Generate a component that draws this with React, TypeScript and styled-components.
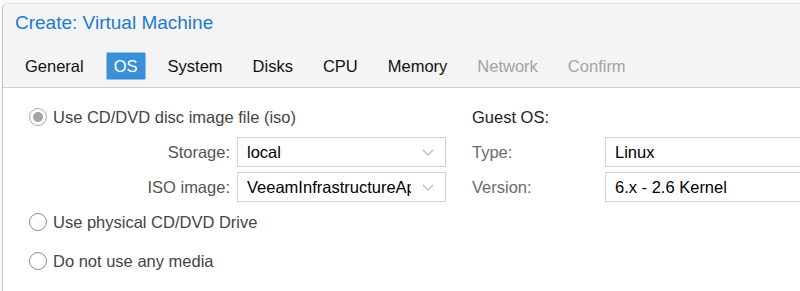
import React from "react";
import styled, { createGlobalStyle } from "styled-components";

const GlobalStyle = createGlobalStyle`
  html, body {
    margin: 0;
    padding: 0;
    background: #fafafa;
    overflow: hidden;
  }
  body {
    font-family: "Liberation Sans", Arial, sans-serif;
  }
`;

const Window = styled.div`
  margin: 3px 0 0 2px;
  height: 300px;
  border-left: 1px solid #c3c3c3;
  border-top: 1px solid #e4e4e4;
  border-top-left-radius: 5px;
  background: #f4f4f4;
  display: flex;
  flex-direction: column;
`;

const Title = styled.div`
  padding: 8px 0 0 12px;
  font-size: 19px;
  line-height: 22px;
  color: #1d7ad0;
`;

const TabBar = styled.div`
  display: flex;
  gap: 14px;
  padding: 18px 0 7px 14px;
`;

const Tab = styled.div<{ $active?: boolean; $disabled?: boolean }>`
  height: 26px;
  line-height: 27px;
  padding: 0 7px;
  font-size: 16.5px;
  border: 1px solid ${({ $active }) => ($active ? "#8fbfea" : "transparent")};
  border-radius: 2px;
  background: ${({ $active }) => ($active ? "#3a8fd6" : "transparent")};
  color: ${({ $active, $disabled }) =>
    $active ? "#fff" : $disabled ? "#a3a3a3" : "#111"};
`;

const Body = styled.div`
  flex: 1;
  background: #fff;
  border-top: 1px solid #cfcfcf;
  display: grid;
  grid-template-columns: 443px 1fr;
  column-gap: 26px;
  padding-top: 14px;
`;

const Column = styled.div`
  display: flex;
  flex-direction: column;
  gap: 5px;
`;

const RadioRow = styled.label<{ $gapTop?: number }>`
  display: flex;
  align-items: center;
  height: 30px;
  padding-left: 26px;
  margin-top: ${({ $gapTop }) => $gapTop ?? 0}px;
  font-size: 16.5px;
  color: #444;
  gap: 6px;
`;

const RadioCircle = styled.span<{ $checked?: boolean }>`
  box-sizing: border-box;
  width: 18px;
  height: 18px;
  border-radius: 50%;
  border: 1px solid ${({ $checked }) => ($checked ? "#a9a9a9" : "#8d8d8d")};
  display: flex;
  align-items: center;
  justify-content: center;
  &::after {
    content: "";
    display: ${({ $checked }) => ($checked ? "block" : "none")};
    width: 10px;
    height: 10px;
    border-radius: 50%;
    background: #a3a3a3;
  }
`;

const FieldRow = styled.div<{ $labelWidth: number; $align: "left" | "right" }>`
  display: grid;
  grid-template-columns: ${({ $labelWidth }) => $labelWidth}px 1fr;
  align-items: center;
  height: 30px;
  label {
    text-align: ${({ $align }) => $align};
    padding-right: ${({ $align }) => ($align === "right" ? 7 : 0)}px;
  }
`;

const FieldLabel = styled.label<{ $muted?: boolean }>`
  font-size: 16.5px;
  color: ${({ $muted }) => ($muted ? "#6a6a6a" : "#555")};
`;

const Heading = styled.div`
  height: 30px;
  display: flex;
  align-items: center;
  font-size: 16.5px;
  color: #222;
`;

const Select = styled.div<{ $width?: number }>`
  box-sizing: border-box;
  height: 30px;
  width: ${({ $width }) => ($width ? `${$width}px` : "auto")};
  min-width: 0;
  border: 1px solid #d2d2d2;
  display: flex;
  align-items: center;
  padding-left: 9px;
  font-size: 16.5px;
  color: #000;
  overflow: hidden;
`;

const SelectText = styled.span`
  flex: 1;
  min-width: 0;
  white-space: nowrap;
  overflow: hidden;
`;

const Trigger = styled.span`
  width: 34px;
  display: flex;
  justify-content: center;
  flex-shrink: 0;
`;

const Chevron = () => (
  <svg width="12" height="7" viewBox="0 0 12 7">
    <path d="M1 1 L6 6 L11 1" fill="none" stroke="#b4b4b4" strokeWidth="1.2" />
  </svg>
);

const tabs = [
  { name: "General" },
  { name: "OS", active: true },
  { name: "System" },
  { name: "Disks" },
  { name: "CPU" },
  { name: "Memory" },
  { name: "Network", disabled: true },
  { name: "Confirm", disabled: true },
];

export default function App() {
  return (
    <>
      <GlobalStyle />
      <Window>
        <Title>Create: Virtual Machine</Title>
        <TabBar>
          {tabs.map((t) => (
            <Tab key={t.name} $active={t.active} $disabled={t.disabled}>
              {t.name}
            </Tab>
          ))}
        </TabBar>
        <Body>
          <Column>
            <RadioRow>
              <RadioCircle $checked />
              Use CD/DVD disc image file (iso)
            </RadioRow>
            <FieldRow $labelWidth={234} $align="right">
              <FieldLabel>Storage:</FieldLabel>
              <Select>
                <SelectText>local</SelectText>
                <Trigger>
                  <Chevron />
                </Trigger>
              </Select>
            </FieldRow>
            <FieldRow $labelWidth={234} $align="right">
              <FieldLabel>ISO image:</FieldLabel>
              <Select>
                <SelectText>VeeamInfrastructureAppliance.iso</SelectText>
                <Trigger>
                  <Chevron />
                </Trigger>
              </Select>
            </FieldRow>
            <RadioRow>
              <RadioCircle />
              Use physical CD/DVD Drive
            </RadioRow>
            <RadioRow $gapTop={4}>
              <RadioCircle />
              Do not use any media
            </RadioRow>
          </Column>
          <Column>
            <Heading>Guest OS:</Heading>
            <FieldRow $labelWidth={133} $align="left">
              <FieldLabel $muted>Type:</FieldLabel>
              <Select $width={260}>
                <SelectText>Linux</SelectText>
              </Select>
            </FieldRow>
            <FieldRow $labelWidth={133} $align="left">
              <FieldLabel $muted>Version:</FieldLabel>
              <Select $width={260}>
                <SelectText>6.x - 2.6 Kernel</SelectText>
              </Select>
            </FieldRow>
          </Column>
        </Body>
      </Window>
    </>
  );
}
